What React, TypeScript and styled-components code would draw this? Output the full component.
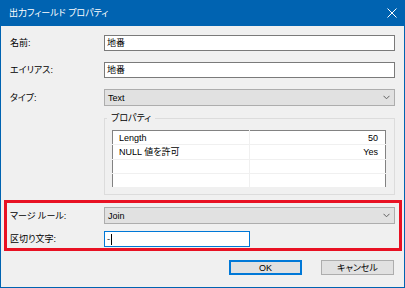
import styled, { createGlobalStyle } from "styled-components";

const GlobalStyle = createGlobalStyle`
  html, body {
    margin: 0;
    padding: 0;
    background: #f0f0f0;
  }
  body {
    font-family: "Liberation Sans", "Noto Sans CJK JP", sans-serif;
    font-size: 9px;
    line-height: 12px;
    color: #000;
    font-feature-settings: "palt";
    -webkit-font-smoothing: antialiased;
  }
`

const Window = styled.div`
  width: 405px;
  height: 288px;
  box-sizing: border-box;
  border: 1px solid #0063b1;
  border-top: none;
  background: #f0f0f0;
  display: flex;
  flex-direction: column;
`

const TitleBar = styled.div`
  height: 26px;
  flex: none;
  background: #0063b1;
  color: #fff;
  display: flex;
  align-items: center;
  justify-content: space-between;
  padding: 0 7px 0 8px;
  font-size: 9px;
`

const Body = styled.div`
  display: flex;
  flex-direction: column;
  padding: 9px 9px 0 9px;
`

const FormRow = styled.div<{ $gap?: number }>`
  display: grid;
  grid-template-columns: 94px 1fr;
  align-items: center;
  margin-top: ${p => p.$gap ?? 0}px;
`

const Label = styled.span`
  white-space: nowrap;
  color: #000;
`

const TextBox = styled.div<{ $focused?: boolean; $width?: number }>`
  height: 16px;
  box-sizing: border-box;
  width: ${p => (p.$width ? `${p.$width}px` : "auto")};
  border: 1px solid ${p => (p.$focused ? "#0078d7" : "#7a7a7a")};
  background: #fff;
  color: #000;
  padding-left: 2px;
  display: flex;
  align-items: center;
`

const BoxText = styled.span`
  font-family: "Noto Sans CJK SC", "Noto Sans CJK JP", sans-serif;
  color: #000;
  -webkit-text-fill-color: #000;
`

const Caret = styled.span`
  display: inline-block;
  width: 1px;
  height: 11px;
  background: #000;
  margin-left: 1px;
`

const ComboBox = styled.div`
  height: 17px;
  box-sizing: border-box;
  border: 1px solid #adadad;
  background: #e1e1e1;
  color: #000;
  padding: 0 4px 0 3px;
  display: flex;
  align-items: center;
  justify-content: space-between;
`

const GroupBox = styled.fieldset`
  margin: 6px 0 0 94px;
  border: 1px solid #dcdcdc;
  padding: 6px 8px 6px 7px;
  min-width: 0;
`

const GroupTitle = styled.legend`
  padding: 0 4px;
  margin-left: -5px;
  line-height: 12px;
`

const ListTable = styled.table`
  width: 100%;
  height: 58px;
  box-sizing: border-box;
  border-collapse: collapse;
  border: 1px solid #828282;
  background: #fff;
  table-layout: fixed;
`

const ListCell = styled.td<{ $right?: boolean }>`
  height: 13px;
  padding: 0 ${p => (p.$right ? "7px" : "0")} 0 ${p => (p.$right ? "0" : "6px")};
  text-align: ${p => (p.$right ? "right" : "left")};
  border-bottom: 1px solid #f0f0f0;
  border-right: ${p => (p.$right ? "none" : "1px solid #f0f0f0")};
  white-space: nowrap;
  line-height: 12px;
  color: #000;
`

const Highlight = styled.div`
  margin: 5px -7px 0 -6px;
  border: 3px solid #e81123;
  padding: 4px 4px 1px 3px;
  display: flex;
  flex-direction: column;
`

const ButtonRow = styled.div`
  display: flex;
  justify-content: flex-end;
  gap: 19px;
  margin: 9px 1px 0 0;
`

const Button = styled.div<{ $default?: boolean }>`
  width: 73px;
  height: 15px;
  box-sizing: border-box;
  background: #e1e1e1;
  border: 1px solid ${p => (p.$default ? "#0078d7" : "#adadad")};
  box-shadow: ${p => (p.$default ? "inset 0 0 0 1px #0078d7" : "none")};
  color: #000;
  display: flex;
  align-items: center;
  justify-content: center;
`

const Chevron = () => (
  <svg width="7" height="5" viewBox="0 0 7 5">
    <polyline points="0.5,0.8 3.5,3.8 6.5,0.8" fill="none" stroke="#606060" strokeWidth="1" />
  </svg>
)

const CloseIcon = () => (
  <svg width="10" height="10" viewBox="0 0 10 10">
    <path d="M0.5 0.5 L9.5 9.5 M9.5 0.5 L0.5 9.5" stroke="#fff" strokeWidth="1" />
  </svg>
)

const props = [
  { name: "Length", value: "50" },
  { name: "NULL 値を許可", value: "Yes" },
  { name: "", value: "" },
  { name: "", value: "" },
]

const App = () => {
  return (
    <>
      <GlobalStyle />
      <Window>
        <TitleBar>
          <span>出力フィールド プロパティ</span>
          <CloseIcon />
        </TitleBar>
        <Body>
          <FormRow>
            <Label>名前:</Label>
            <TextBox><BoxText>地番</BoxText></TextBox>
          </FormRow>
          <FormRow $gap={11}>
            <Label>エイリアス:</Label>
            <TextBox><BoxText>地番</BoxText></TextBox>
          </FormRow>
          <FormRow $gap={11}>
            <Label>タイプ:</Label>
            <ComboBox>
              <span>Text</span>
              <Chevron />
            </ComboBox>
          </FormRow>
          <GroupBox>
            <GroupTitle>プロパティ</GroupTitle>
            <ListTable>
              <colgroup>
                <col style={{ width: 137 }} />
                <col />
              </colgroup>
              <tbody>
                {props.map((p, i) => (
                  <tr key={`tr_${i}`}>
                    <ListCell>{p.name}</ListCell>
                    <ListCell $right>{p.value}</ListCell>
                  </tr>
                ))}
              </tbody>
            </ListTable>
          </GroupBox>
          <Highlight>
            <FormRow>
              <Label>マージ ルール:</Label>
              <ComboBox>
                <span>Join</span>
                <Chevron />
              </ComboBox>
            </FormRow>
            <FormRow $gap={7}>
              <Label>区切り文字:</Label>
              <TextBox $focused $width={146}>
                <BoxText>-</BoxText>
                <Caret />
              </TextBox>
            </FormRow>
          </Highlight>
          <ButtonRow>
            <Button $default>OK</Button>
            <Button>キャンセル</Button>
          </ButtonRow>
        </Body>
      </Window>
    </>
  )
}

export default App
